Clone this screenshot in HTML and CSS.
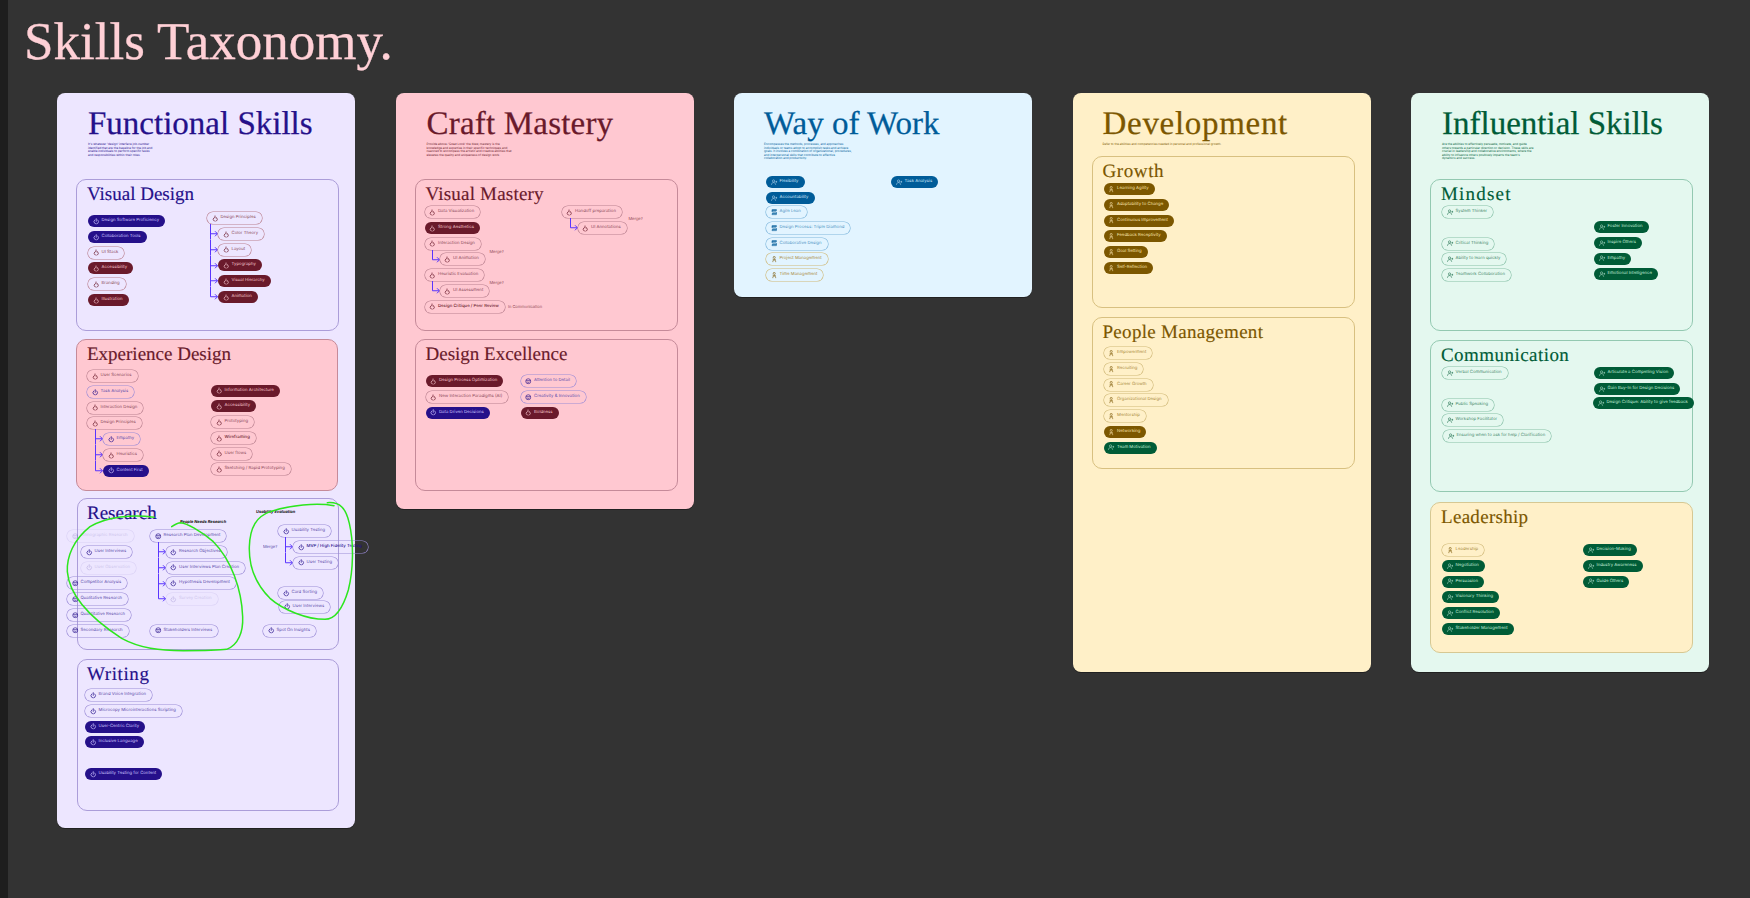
FILE: index.html
```html
<!DOCTYPE html>
<html lang="en">
<head>
<meta charset="utf-8">
<title>Skills Taxonomy</title>
<link rel="stylesheet" href="styles.css">
</head>
<body>
<svg class="defs" aria-hidden="true">
  <symbol id="pw" viewBox="0 0 12 12"><path d="M3.4 3.4a4.2 4.2 0 1 0 5.2 0M6 1.2v5" fill="none" stroke="currentColor" stroke-width="1.3" stroke-linecap="round"/></symbol>
  <symbol id="fl" viewBox="0 0 12 12"><path d="M5.6 1v3M3.2 5.6a3.7 3.7 0 1 0 5.6 0L7.4 4.4 6 5.8 4.6 4.4z" fill="none" stroke="currentColor" stroke-width="1.3" stroke-linejoin="round"/></symbol>
  <symbol id="ci" viewBox="0 0 12 12"><circle cx="6" cy="6" r="4.6" fill="none" stroke="currentColor" stroke-width="1.2"/><path d="M2 5h8M4.2 7.5c1 1 2.6 1 3.6 0" fill="none" stroke="currentColor" stroke-width="1.2"/></symbol>
  <symbol id="up" viewBox="0 0 14 12"><circle cx="5.5" cy="3.2" r="2.4" fill="none" stroke="currentColor" stroke-width="1.1"/><path d="M1 11.5c0-3 2-4.8 4.5-4.8s4.5 1.8 4.5 4.8M9.500 5h4M11.500 3v4" fill="none" stroke="currentColor" stroke-width="1.1"/></symbol>
  <symbol id="pe" viewBox="0 0 12 14"><circle cx="6" cy="3" r="2.2" fill="none" stroke="currentColor" stroke-width="1.3"/><path d="M2.500 6.800c1.500 1.200 5.500 1.200 7 0M3 13.500V11a3 2.400 0 0 1 6 0v2.500" fill="none" stroke="currentColor" stroke-width="1.3"/></symbol>
  <symbol id="sw" viewBox="0 0 12 12"><path d="M10 2.200H3.500a1.500 1.500 0 0 0 0 3.400h5a1.500 1.500 0 0 1 0 3.400H2" fill="none" stroke="currentColor" stroke-width="1.500"/><path d="M2 1h8v2.200H2zM2 8.500h8v2.200H2z" fill="none" stroke="currentColor" stroke-width="1"/></symbol>
  <symbol id="am" viewBox="0 0 8 15.750" preserveAspectRatio="none"><path d="M.5 0v15.750M.5 9.750h7M5 7.250l2.500 2.500L5 12.250" fill="none" stroke="#5a35ff" stroke-width="1"/></symbol>
  <symbol id="ae" viewBox="0 0 8 15.750" preserveAspectRatio="none"><path d="M.5 0v9.750h7M5 7.250l2.500 2.500L5 12.250" fill="none" stroke="#5a35ff" stroke-width="1"/></symbol>
</svg>

<div class="rail"></div>
<main class="page">
  <h1 class="page-title">Skills Taxonomy.</h1>
  <div class="board">

    <section class="card purple c1">
      <header class="card-head">
        <h2>Functional Skills</h2>
        <p class="w66">It's whatever 'design' interface job-number identified that are the baseline for the job and enable individuals to perform specific tasks and responsibilities within their roles.</p>
      </header>

      <div class="sec vd">
        <h3>Visual Design</h3>
        <div class="cols">
          <div class="col a">
            <span class="chip fill p"><svg class="ic"><use href="#pw"/></svg>Design Software Proficiency</span>
            <span class="chip fill p"><svg class="ic"><use href="#pw"/></svg>Collaboration Tools</span>
            <span class="chip line m"><svg class="ic"><use href="#fl"/></svg>UI Stack</span>
            <span class="chip fill m"><svg class="ic"><use href="#fl"/></svg>Accessibility</span>
            <span class="chip line m"><svg class="ic"><use href="#fl"/></svg>Branding</span>
            <span class="chip fill m"><svg class="ic"><use href="#fl"/></svg>Illustration</span>
          </div>
          <div class="col b">
            <div class="tree">
              <span class="chip line m"><svg class="ic"><use href="#fl"/></svg>Design Principles</span>
              <div class="branch"><svg class="ar"><use href="#am"/></svg><span class="chip line m"><svg class="ic"><use href="#fl"/></svg>Color Theory</span></div>
              <div class="branch"><svg class="ar"><use href="#am"/></svg><span class="chip line m"><svg class="ic"><use href="#fl"/></svg>Layout</span></div>
              <div class="branch"><svg class="ar"><use href="#am"/></svg><span class="chip fill m"><svg class="ic"><use href="#fl"/></svg>Typography</span></div>
              <div class="branch"><svg class="ar"><use href="#am"/></svg><span class="chip fill m"><svg class="ic"><use href="#fl"/></svg>Visual Hierarchy</span></div>
              <div class="branch"><svg class="ar"><use href="#ae"/></svg><span class="chip fill m"><svg class="ic"><use href="#fl"/></svg>Animation</span></div>
            </div>
          </div>
        </div>
      </div>

      <div class="sec exp tint-pink">
        <h3>Experience Design</h3>
        <div class="cols">
          <div class="col a">
            <span class="chip line m"><svg class="ic"><use href="#fl"/></svg>User Scenarios</span>
            <span class="chip line p"><svg class="ic"><use href="#pw"/></svg>Task Analysis</span>
            <span class="chip line m"><svg class="ic"><use href="#fl"/></svg>Interaction Design</span>
            <div class="tree">
              <span class="chip line m"><svg class="ic"><use href="#fl"/></svg>Design Principles</span>
              <div class="branch"><svg class="ar"><use href="#am"/></svg><span class="chip line p"><svg class="ic"><use href="#pw"/></svg>Empathy</span></div>
              <div class="branch"><svg class="ar"><use href="#am"/></svg><span class="chip line m"><svg class="ic"><use href="#fl"/></svg>Heuristics</span></div>
              <div class="branch"><svg class="ar"><use href="#ae"/></svg><span class="chip fill p"><svg class="ic"><use href="#pw"/></svg>Content First</span></div>
            </div>
          </div>
          <div class="col b">
            <span class="chip fill m"><svg class="ic"><use href="#fl"/></svg>Information Architecture</span>
            <span class="chip fill m"><svg class="ic"><use href="#fl"/></svg>Accessibility</span>
            <span class="chip line m"><svg class="ic"><use href="#fl"/></svg>Prototyping</span>
            <span class="chip line m dark"><svg class="ic"><use href="#fl"/></svg>Wireframing</span>
            <span class="chip line m"><svg class="ic"><use href="#fl"/></svg>User flows</span>
            <span class="chip line m"><svg class="ic"><use href="#fl"/></svg>Sketching / Rapid Prototyping</span>
          </div>
        </div>
      </div>

      <div class="sec res">
        <h3>Research</h3>
        <div class="cols">
          <div class="col a">
            <span class="chip line p faded"><svg class="ic"><use href="#ci"/></svg>Ethnographic Research</span>
            <span class="chip line p indent"><svg class="ic"><use href="#pw"/></svg>User Interviews</span>
            <span class="chip line p faded indent"><svg class="ic"><use href="#pw"/></svg>User Observation</span>
            <span class="chip line p"><svg class="ic"><use href="#ci"/></svg>Competitor Analysis</span>
            <span class="chip line p"><svg class="ic"><use href="#ci"/></svg>Qualitative Research</span>
            <span class="chip line p"><svg class="ic"><use href="#ci"/></svg>Quantitative Research</span>
            <span class="chip line p"><svg class="ic"><use href="#ci"/></svg>Secondary Research</span>
          </div>
          <div class="col b">
            <span class="label needs">People Needs Research</span>
            <div class="tree">
              <span class="chip line p"><svg class="ic"><use href="#ci"/></svg>Research Plan Development</span>
              <div class="branch"><svg class="ar"><use href="#am"/></svg><span class="chip line p"><svg class="ic"><use href="#pw"/></svg>Research Objectives</span></div>
              <div class="branch"><svg class="ar"><use href="#am"/></svg><span class="chip line p"><svg class="ic"><use href="#pw"/></svg>User Interviews Plan Creation</span></div>
              <div class="branch"><svg class="ar"><use href="#am"/></svg><span class="chip line p"><svg class="ic"><use href="#pw"/></svg>Hypothesis Development</span></div>
              <div class="branch"><svg class="ar"><use href="#ae"/></svg><span class="chip line p faded"><svg class="ic"><use href="#pw"/></svg>Survey Creation</span></div>
            </div>
            <span class="row-gap"></span>
            <span class="chip line p"><svg class="ic"><use href="#ci"/></svg>Stakeholders Interviews</span>
          </div>
          <div class="col c">
            <span class="label usab">Usability Evaluation</span>
            <div class="tree test">
              <span class="note merge-u">Merge?</span>
              <span class="chip line p"><svg class="ic"><use href="#pw"/></svg>Usability Testing</span>
              <div class="branch"><svg class="ar"><use href="#am"/></svg><span class="chip line p dark mvp"><svg class="ic"><use href="#pw"/></svg>MVP / High Fidelity Testing</span></div>
              <div class="branch"><svg class="ar"><use href="#ae"/></svg><span class="chip line p"><svg class="ic"><use href="#pw"/></svg>User Testing</span></div>
            </div>
            <span class="chip line p card-sort"><svg class="ic"><use href="#pw"/></svg>Card Sorting</span>
            <span class="chip line p user-int"><svg class="ic"><use href="#pw"/></svg>User Interviews</span>
            <span class="chip line p spot"><svg class="ic"><use href="#pw"/></svg>Spot On Insights</span>
          </div>
        </div>
        <svg class="scribble" viewBox="0 0 990 990" aria-hidden="true">
          <path d="M312 562C250 552 170 560 120 590C70 630 50 680 52 725C58 800 130 870 215 925C270 955 330 962 400 962C450 962 500 962 530 958C565 945 580 905 578 860C575 780 545 690 490 635C450 600 410 580 392 578C385 578 375 583 365 590"/>
          <path d="M852 527C800 518 720 525 660 545C620 560 600 590 598 650C596 720 625 770 660 805C700 840 770 868 825 868C860 868 880 830 895 780C910 720 912 640 898 580C888 535 870 515 832 518"/>
        </svg>
      </div>

      <div class="sec wri">
        <h3>Writing</h3>
        <div class="cols">
          <div class="col a">
            <span class="chip line p"><svg class="ic"><use href="#pw"/></svg>Brand Voice Integration</span>
            <span class="chip line p"><svg class="ic"><use href="#pw"/></svg>Microcopy Microinteractions Scripting</span>
            <span class="chip fill p"><svg class="ic"><use href="#pw"/></svg>User-Centric Clarity</span>
            <span class="chip fill p"><svg class="ic"><use href="#pw"/></svg>Inclusive Language</span>
            <span class="row-gap"></span>
            <span class="chip fill p"><svg class="ic"><use href="#pw"/></svg>Usability Testing for Content</span>
          </div>
        </div>
      </div>
    </section>

    <section class="card maroon c2">
      <header class="card-head">
        <h2>Craft Mastery</h2>
        <p class="w88">Provide above-'Great Look' the blew, mastery is the knowledge and expertise in their specific techniques and nuanced to encompass the artistic and creative abilities that elevates the quality and uniqueness of design work.</p>
      </header>
      <div class="sec vm">
        <h3>Visual Mastery</h3>
        <div class="cols">
          <div class="col a">
            <span class="chip line m"><svg class="ic"><use href="#fl"/></svg>Data Visualization</span>
            <span class="chip fill m"><svg class="ic"><use href="#fl"/></svg>Strong Aesthetics</span>
            <div class="tree">
              <span class="note merge-a">Merge?</span>
              <span class="chip line m"><svg class="ic"><use href="#fl"/></svg>Interaction Design</span>
              <div class="branch"><svg class="ar"><use href="#ae"/></svg><span class="chip line m"><svg class="ic"><use href="#fl"/></svg>UI Animation</span></div>
            </div>
            <div class="tree">
              <span class="note merge-a">Merge?</span>
              <span class="chip line m"><svg class="ic"><use href="#fl"/></svg>Heuristic Evaluation</span>
              <div class="branch"><svg class="ar"><use href="#ae"/></svg><span class="chip line m"><svg class="ic"><use href="#fl"/></svg>UI Assessment</span></div>
            </div>
            <div class="inline">
              <span class="chip line m dark"><svg class="ic"><use href="#fl"/></svg>Design Critique / Peer Review</span>
              <span class="note">In Communication</span>
            </div>
          </div>
          <div class="col b">
            <div class="tree handoff">
              <span class="note merge-h">Merge?</span>
              <span class="chip line m"><svg class="ic"><use href="#fl"/></svg>Handoff preparation</span>
              <div class="branch"><svg class="ar"><use href="#ae"/></svg><span class="chip line m"><svg class="ic"><use href="#fl"/></svg>UI Annotations</span></div>
            </div>
          </div>
        </div>
      </div>
      <div class="sec de">
        <h3>Design Excellence</h3>
        <div class="cols">
          <div class="col a">
            <span class="chip fill m"><svg class="ic"><use href="#fl"/></svg>Design Process Optimization</span>
            <span class="chip line m"><svg class="ic"><use href="#fl"/></svg>New Interaction Paradigms (AI)</span>
            <span class="chip fill p"><svg class="ic"><use href="#pw"/></svg>Data Driven Decisions</span>
          </div>
          <div class="col b">
            <span class="chip line p"><svg class="ic"><use href="#ci"/></svg>Attention to Detail</span>
            <span class="chip line p"><svg class="ic"><use href="#ci"/></svg>Creativity &amp; Innovation</span>
            <span class="chip fill m"><svg class="ic"><use href="#fl"/></svg>Boldness</span>
          </div>
        </div>
      </div>
    </section>

    <section class="card blue c3">
      <header class="card-head">
        <h2>Way of Work</h2>
        <p class="w90">Encompasses the methods, processes, and approaches individuals or teams adopt to accomplish tasks and achieve goals. It involves a combination of organizational, procedures, and interpersonal skills that contribute to effective collaboration and productivity.</p>
      </header>
      <div class="cols">
        <div class="col a">
          <span class="chip fill b"><svg class="ic"><use href="#up"/></svg>Flexibility</span>
          <span class="chip fill b"><svg class="ic"><use href="#up"/></svg>Accountability</span>
          <span class="chip line b tight"><svg class="ic"><use href="#sw"/></svg>Agile Lean</span>
          <span class="chip line b"><svg class="ic"><use href="#sw"/></svg>Design Process: Triple Diamond</span>
          <span class="chip line b"><svg class="ic"><use href="#sw"/></svg>Collaborative Design</span>
          <span class="chip line y"><svg class="ic"><use href="#pe"/></svg>Project Management</span>
          <span class="chip line y"><svg class="ic"><use href="#pe"/></svg>Time Management</span>
        </div>
        <div class="col b">
          <span class="chip fill b"><svg class="ic"><use href="#up"/></svg>Task Analysis</span>
        </div>
      </div>
    </section>

    <section class="card brown c4">
      <header class="card-head">
        <h2>Development</h2>
        <p class="w130">Refer to the abilities and competencies needed in personal and professional growth.</p>
      </header>
      <div class="sec gr">
        <h3>Growth</h3>
        <div class="cols">
          <div class="col a">
            <span class="chip fill y"><svg class="ic"><use href="#pe"/></svg>Learning Agility</span>
            <span class="chip fill y"><svg class="ic"><use href="#pe"/></svg>Adaptability to Change</span>
            <span class="chip fill y"><svg class="ic"><use href="#pe"/></svg>Continuous Improvement</span>
            <span class="chip fill y"><svg class="ic"><use href="#pe"/></svg>Feedback Receptivity</span>
            <span class="chip fill y"><svg class="ic"><use href="#pe"/></svg>Goal Setting</span>
            <span class="chip fill y"><svg class="ic"><use href="#pe"/></svg>Self-Reflection</span>
          </div>
        </div>
      </div>
      <div class="sec pm">
        <h3>People Management</h3>
        <div class="cols">
          <div class="col a">
            <span class="chip line y"><svg class="ic"><use href="#pe"/></svg>Empowerment</span>
            <span class="chip line y"><svg class="ic"><use href="#pe"/></svg>Recruiting</span>
            <span class="chip line y"><svg class="ic"><use href="#pe"/></svg>Career Growth</span>
            <span class="chip line y"><svg class="ic"><use href="#pe"/></svg>Organizational Design</span>
            <span class="chip line y"><svg class="ic"><use href="#pe"/></svg>Mentorship</span>
            <span class="chip fill y"><svg class="ic"><use href="#pe"/></svg>Networking</span>
            <span class="chip fill g"><svg class="ic"><use href="#up"/></svg>Team Motivation</span>
          </div>
        </div>
      </div>
    </section>

    <section class="card green c5">
      <header class="card-head">
        <h2>Influential Skills</h2>
        <p class="w92">Are the abilities to effectively persuade, motivate, and guide others towards a particular direction or decision. These skills are crucial in leadership and collaborative environments, where the ability to influence others positively impacts the team's dynamics and success.</p>
      </header>
      <div class="sec mi">
        <h3>Mindset</h3>
        <div class="cols">
          <div class="col a">
            <span class="chip line g"><svg class="ic"><use href="#up"/></svg>System Thinker</span>
            <span class="row-gap"></span>
            <span class="chip line g"><svg class="ic"><use href="#up"/></svg>Critical Thinking</span>
            <span class="chip line g"><svg class="ic"><use href="#up"/></svg>Ability to learn quickly</span>
            <span class="chip line g"><svg class="ic"><use href="#up"/></svg>Teamwork Collaboration</span>
          </div>
          <div class="col b">
            <span class="chip fill g"><svg class="ic"><use href="#up"/></svg>Foster Innovation</span>
            <span class="chip fill g"><svg class="ic"><use href="#up"/></svg>Inspire Others</span>
            <span class="chip fill g"><svg class="ic"><use href="#up"/></svg>Empathy</span>
            <span class="chip fill g"><svg class="ic"><use href="#up"/></svg>Emotional Intelligence</span>
          </div>
        </div>
      </div>
      <div class="sec co">
        <h3>Communication</h3>
        <div class="cols">
          <div class="col a">
            <span class="chip line g"><svg class="ic"><use href="#up"/></svg>Verbal Communication</span>
            <span class="row-gap"></span>
            <span class="chip line g"><svg class="ic"><use href="#up"/></svg>Public Speaking</span>
            <span class="chip line g"><svg class="ic"><use href="#up"/></svg>Workshop Facilitator</span>
            <span class="chip line g nudge-r"><svg class="ic"><use href="#up"/></svg>Ensuring when to ask for help / Clarification</span>
          </div>
          <div class="col b">
            <span class="chip fill g"><svg class="ic"><use href="#up"/></svg>Articulate a Compelling Vision</span>
            <span class="chip fill g"><svg class="ic"><use href="#up"/></svg>Gain Buy-In for Design Decisions</span>
            <span class="chip fill g nudge-l tight"><svg class="ic"><use href="#up"/></svg>Design Critique: Ability to give feedback</span>
          </div>
        </div>
      </div>
      <div class="sec le tint-cream">
        <h3>Leadership</h3>
        <div class="cols">
          <div class="col a">
            <span class="chip line y"><svg class="ic"><use href="#pe"/></svg>Leadership</span>
            <span class="chip fill g"><svg class="ic"><use href="#up"/></svg>Negotiation</span>
            <span class="chip fill g"><svg class="ic"><use href="#up"/></svg>Persuasion</span>
            <span class="chip fill g"><svg class="ic"><use href="#up"/></svg>Visionary Thinking</span>
            <span class="chip fill g"><svg class="ic"><use href="#up"/></svg>Conflict Resolution</span>
            <span class="chip fill g"><svg class="ic"><use href="#up"/></svg>Stakeholder Management</span>
          </div>
          <div class="col b">
            <span class="chip fill g"><svg class="ic"><use href="#up"/></svg>Decision-Making</span>
            <span class="chip fill g"><svg class="ic"><use href="#up"/></svg>Industry Awareness</span>
            <span class="chip fill g"><svg class="ic"><use href="#up"/></svg>Guide Others</span>
          </div>
        </div>
      </div>
    </section>

  </div>
</main>
</body>
</html>
```

FILE: styles.css
```css
* { box-sizing: border-box; }
html, body { margin: 0; height: 100%; }
body {
  background: #333333;
  display: flex;
  overflow: hidden;
  font-family: "Inter", "Noto Sans", sans-serif;
  text-rendering: geometricPrecision;
}
.defs { width: 0; height: 0; position: absolute; }
.rail { width: 8px; flex: none; background: #1e1e1e; }
.page { flex: 1; min-width: 0; }
.page-title {
  margin: 12px 0 21px 16px;
  font: 400 53px/60px "Liberation Serif", serif;
  color: #ffd0d6;
  -webkit-text-stroke: .3px #ffd0d6;
}
.board { display: flex; gap: 40.5px; padding-left: 49px; align-items: flex-start; }

/* Cards */
.card {
  flex: none;
  width: 298px;
  padding-left: 19px;
  border-radius: 8px;
  color: var(--c);
  background: var(--bg);
  box-shadow: 0 1px 0 rgba(0,0,0,.35);
}
.purple { --c: #25108a; --bg: #ede6ff; --edge: #ab9dd9; }
.maroon { --c: #6a1a2b; --bg: #ffc8d1; --edge: #c58a99; }
.blue   { --c: #005c99; --bg: #e2f4ff; --edge: #8ec1e0; }
.brown  { --c: #7c5700; --bg: #fff0c8; --edge: #d8c080; }
.green  { --c: #005c37; --bg: #e4f8ef; --edge: #93c9b1; }
.c1 { height: 735px; }
.c2 { height: 416px; }
.c3 { height: 204px; }
.c4, .c5 { height: 579px; }

.card-head { height: 86px; padding: 11px 0 0 12px; }
.card-head h2 {
  margin: 0 0 -1px;
  font: 400 33px/40px "Liberation Serif", serif;
  -webkit-text-stroke: .25px currentColor;
}
.card-head p { margin: 0; font-size: 3px; line-height: 3.5px; }
.w66 { width: 66px; }
.w88 { width: 88px; }
.w90 { width: 90px; }
.w92 { width: 92px; }
.w130 { width: 125px; }
.c2 h2 { letter-spacing: .2px; }
.c3 .card-head { height: 83px; padding-left: 11px; }
.c4 .card-head { height: 63px; padding-left: 11px; }
.c4 h2 { letter-spacing: .7px; }
.c3 .cols { padding-left: 13px; grid-template-columns: 125px 1fr; }

/* Sections */
.sec {
  position: relative;
  width: 263px;
  height: 152px;
  border: 1px solid var(--edge);
  border-radius: 10px;
  margin-top: 8px;
}
.card-head + .sec { margin-top: 0; }
.sec h3 {
  margin: 0;
  padding: 3px 0 0 10px;
  height: 26px;
  font: 400 19px/23px "Liberation Serif", serif;
  -webkit-text-stroke: .15px currentColor;
}
.vm h3 { letter-spacing: .2px; }
.pm h3, .le h3 { letter-spacing: .3px; }
.co h3 { letter-spacing: .45px; }
.mi h3 { letter-spacing: 1.2px; }
.gr h3, .wri h3 { letter-spacing: .6px; }
.tint-pink { --c: #6a1a2b; --edge: #c58a99; color: #6a1a2b; background: #ffc8d1; }
.tint-cream { --edge: #d6c893; color: #7c5700; background: #fff0c8; }

/* Columns */
.cols { display: grid; align-items: start; }
.col { display: flex; flex-direction: column; align-items: flex-start; gap: 3.75px; min-width: 0; }
.row-gap { height: 12px; }

/* Section offsets */
.vd .cols { padding-left: 11px; grid-template-columns: 119px 1fr; }
.vd .a { margin-top: 9px; }
.vd .b { margin-top: 6px; }
.vd .tree { --branch-left: 3px; }

.exp { width: 262px; }
.exp .cols { padding-left: 10px; grid-template-columns: 124px 1fr; }
.exp .a { margin-top: 4px; }
.exp .b { margin-top: 18.7px; }
.exp .tree { --branch-left: 8px; }

.res { width: 262.5px; margin-left: .5px; margin-top: 7px; }
.res h3 { padding-left: 9.5px; }
.res .cols { margin-left: -10.5px; grid-template-columns: 83px 106px 1fr; }
.res .a { margin-top: 5px; }
.res .b { margin-top: -5px; }
.res .c { margin-top: -15px; }
.label { height: 4px; font: italic 700 4px/4px "Inter", sans-serif; color: #111; white-space: nowrap; }
.needs { margin: 0 0 2.25px 30px; }
.usab { margin-bottom: 7.25px; }
.indent { margin-left: 14px; }
.test { margin-left: 22px; --branch-left: 7px; }
.card-sort { margin: 15px 0 0 22px; }
.user-int { margin: -2.5px 0 0 23px; }
.spot { margin: 8.4px 0 0 7px; }
.faded { opacity: .22; }
.mvp { font-size: 4.1px; }

.scribble {
  position: absolute;
  left: -27.5px;
  top: -169px;
  width: 330px;
  height: 330px;
  overflow: visible;
  pointer-events: none;
}
.scribble path { fill: none; stroke: #2de61e; stroke-width: 4.5; stroke-linecap: round; }

.wri { width: 262.5px; margin-left: .5px; margin-top: 9px; }
.wri h3 { padding-left: 9.5px; }
.wri .cols { padding-left: 7.5px; }
.wri .a { margin-top: 3px; }

.vm .cols { padding-left: 9px; grid-template-columns: 137px 1fr; }
.vm .tree { --branch-left: 7px; }
.vm .handoff { --branch-left: 8px; }
.de .cols { padding-left: 10px; grid-template-columns: 95px 1fr; }
.de .col { margin-top: 9px; }

.gr .cols { padding-left: 11px; }
.pm { margin-top: 9px; }
.pm .cols { padding-left: 11px; }
.pm .a { margin-top: 3px; }

.mi .cols, .co .cols { padding-left: 11px; grid-template-columns: 152px 1fr; }
.mi .b { margin-top: 15px; }
.co { margin-top: 9px; }
.nudge-r { margin-left: 1px; }
.nudge-l { margin-left: -1px; }
.tight { margin-top: -1.5px; }
.le { margin-top: 10px; height: 151px; }
.le .cols { padding-left: 11px; grid-template-columns: 141px 1fr; }
.le .col { margin-top: 15px; }

/* Chips */
.chip {
  display: inline-flex;
  align-items: center;
  flex: none;
  gap: 2.5px;
  height: 12px;
  padding: 0 6px 0 4.5px;
  border-radius: 6px;
  font-size: 4.3px;
  line-height: 12px;
  white-space: nowrap;
}
.ic { flex: none; width: 6.5px; height: 6.5px; overflow: visible; }
.p { --chip: #25108a; --ink: #cfc6ff; --soft: #5c4cab; --rim: #9a8bd6; }
.m { --chip: #6a1a2b; --ink: #f5c5cd; --soft: #8c4a5b; --rim: #b9808f; }
.b { --chip: #005c99; --ink: #cde7f9; --soft: #4f94c4; --rim: #7fb6dc; }
.y { --chip: #7c5700; --ink: #fbe5ae; --soft: #a98a3c; --rim: #cfb877; }
.g { --chip: #005c37; --ink: #c4eedb; --soft: #47896c; --rim: #86bfa6; }
.fill { background: var(--chip); color: var(--ink); }
.line { color: var(--soft); box-shadow: 0 0 0 .6px var(--rim); }
.line .ic { color: var(--chip); }
.dark { color: var(--chip); font-weight: 500; }

/* Trees */
.tree { position: relative; display: flex; flex-direction: column; align-items: flex-start; gap: 3.75px; }
.branch { display: flex; align-items: flex-start; height: 12px; margin-left: var(--branch-left, 7.5px); }
.ar { flex: none; width: 8px; height: 15.75px; margin-top: -3.75px; overflow: visible; }

.inline { display: flex; align-items: center; gap: 3px; }
.note { font-size: 4px; line-height: 4px; white-space: nowrap; opacity: .75; }
.merge-a { position: absolute; left: 65px; top: 12px; }
.merge-h { position: absolute; left: 67px; top: 11px; }
.merge-u { position: absolute; left: -15px; top: 20px; color: #25108a; }
```
